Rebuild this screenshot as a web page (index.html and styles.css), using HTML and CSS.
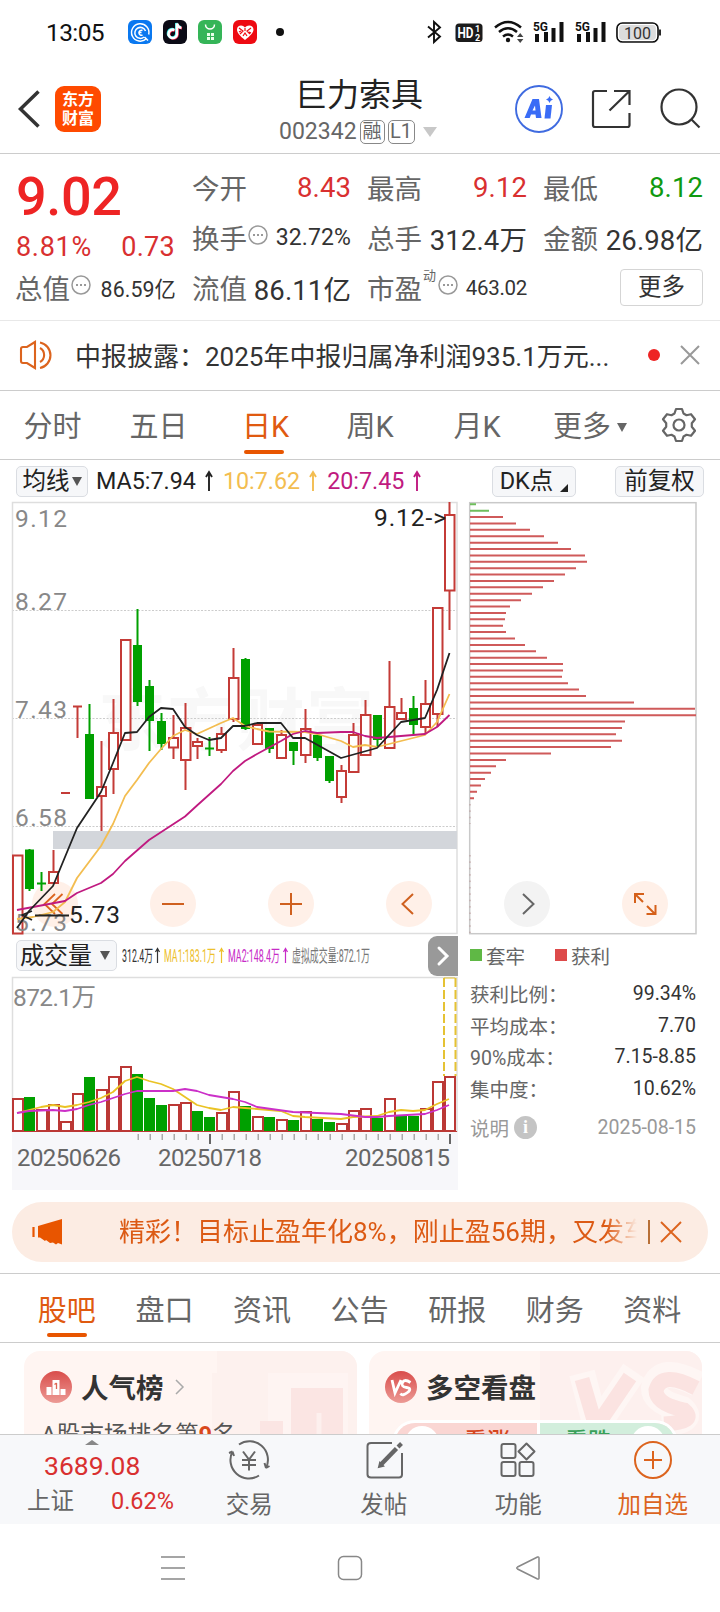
FILE: index.html
```html
<!DOCTYPE html>
<html lang="zh-CN">
<head>
<meta charset="utf-8">
<title>巨力索具 002342</title>
<link rel="stylesheet" href="styles.css">
</head>
<body>
<div class="app">

<div class="status">
  <span class="clock">13:05</span>
  <svg class="apps" width="160" height="24" viewBox="128 20 160 24">
    <rect x="128" y="20" width="24" height="24" rx="6" fill="#0a78f0"/>
    <g fill="none" stroke="#fff" stroke-width="1.5"><path d="M146.500 38.500a8.700 8.700 0 1 1 2.200-4M144 37a5.500 5.500 0 1 1 1.500-6M142.500 30.500a2.500 2.500 0 1 0 0 4.500M138.500 32.500h3M144.500 37l3.500 3.500"/></g>
    <rect x="163" y="20" width="24" height="24" rx="6" fill="#0b0b16"/>
    <g fill="none" stroke-width="2.600"><path d="M175 30.500a4.200 4.200 0 1 0 2.500 4.300V24c.5 2.500 2 4 4.500 4.300" stroke="#ff2c55"/><path d="M173.800 29.500a4.200 4.200 0 1 0 2.500 4.300V23c.5 2.500 2 4 4.500 4.300" stroke="#25e6e2"/><path d="M174.400 30a4.200 4.200 0 1 0 2.500 4.300V23.500c.5 2.500 2 4 4.500 4.300" stroke="#fff"/></g>
    <rect x="198" y="20" width="24" height="24" rx="6" fill="#35b558"/>
    <path d="M205.500 24.500a4.500 4.500 0 0 0 9 0" fill="none" stroke="#fff" stroke-width="1.500"/>
    <path d="M207 33h3v3h-3zm4 0h3v3h-3zm-4 4h3v3h-3zm4 0h3v3h-3z" fill="#e9ffe9"/>
    <rect x="233" y="20" width="24" height="24" rx="6" fill="#ee0a12"/>
    <path d="M245 40c-5-4-8-7-8-10.500 0-4.500 5.500-5.500 8-2 2.500-3.500 8.500-2.500 8.500 2 0 3.500-3.500 6.500-8.500 10.500z" fill="#fff"/>
    <path d="M239 28l4 3-3 3M251 28l-4 3 3 3M243 36l2-3 2 3M245 28v3M241 31l-2 1M249 32l2 1" fill="none" stroke="#ee0a12" stroke-width="1.200"/>
    <circle cx="280" cy="32" r="4" fill="#111"/>
  </svg>
  <svg class="signals" width="236" height="24" viewBox="428 20 236 24">
    <path d="M429 26.500l12 10-6 5.500V22l6 5.500-12 10" fill="none" stroke="#111" stroke-width="1.900"/>
    <rect x="456.500" y="23.500" width="27" height="18.500" rx="3.500" fill="#1b1b1b"/>
    <text x="458.500" y="38" class="hd" textLength="16" lengthAdjust="spacingAndGlyphs">HD</text>
    <text x="476" y="32" class="tiny">1</text><text x="476" y="40.500" class="tiny">2</text>
    <g fill="none" stroke="#111" stroke-width="2.500"><path d="M496 27.500q13-11 26 0M500 32q9-7.500 18 0M504 36.500q5-4 10 0"/></g>
    <circle cx="509" cy="40" r="2.200" fill="#111"/>
    <path d="M518 37l3.200-4 3.200 4zM518 39l3.200 4 3.200-4z" fill="#444"/>
    <g id="cell"><text x="534" y="31" class="fiveg" textLength="15" lengthAdjust="spacingAndGlyphs">5G</text>
    <path d="M538 34v8M547 32v10M554.500 28v14M562.500 22v20" stroke="#111" stroke-width="4"/></g>
    <use href="#cell" x="42"/>
    <rect x="618" y="23" width="41" height="19" rx="5.500" fill="#dcdcdc" stroke="#111" stroke-width="1.700"/>
    <rect x="619.500" y="24.500" width="38" height="16" rx="4" fill="none" stroke="#fff" stroke-width="1.200"/>
    <path d="M661 29.500v6" stroke="#111" stroke-width="1.800"/>
    <text x="625" y="38.500" class="batt" textLength="27">100</text>
  </svg>
</div>

<header class="header">
  <svg class="back" width="22" height="38" viewBox="18 90 22 38"><path d="M38.500 91.500L20.500 109l18 17.500" fill="none" stroke="#333" stroke-width="3.500"/></svg>
  <div class="logo"><span>东方</span><span>财富</span></div>
  <div class="names">
    <div class="stock">巨力索具</div>
    <div class="code"><span>002342</span><i class="badge">融</i><i class="badge l1">L1</i><svg width="14" height="10" viewBox="0 0 14 10"><path d="M0 0h14l-7 10z" fill="#c8c8c8"/></svg></div>
  </div>
  <svg class="tools" width="196" height="50" viewBox="514 84 196 50">
    <circle cx="539" cy="109" r="23" fill="#fff" stroke="#3f6be0" stroke-width="1.900"/>
    <path d="M524.500 118l8-19h6.500l2.500 19h-5.500l-.5-3.500h-4.500l-1.300 3.500zm8-7.500h3l-.5-5z" fill="#3a6cf6" fill-rule="evenodd"/>
    <path d="M546 105h6l-1.500 13.500h-6z" fill="#3a6cf6"/>
    <path d="M549.500 96l1.200 2.300 2.300 1.200-2.300 1.200-1.200 2.300-1.200-2.300-2.300-1.200 2.300-1.200z" fill="#3a6cf6"/>
    <g fill="none" stroke="#333" stroke-width="2.200"><path d="M607 91H595q-2 0-2 2v32q0 2 2 2h32.500q2 0 2-2V113M614 91h15.500v14M629 91.500L609.500 110.500"/><circle cx="679" cy="107" r="17.500"/><path d="M691.500 119.500l8 8"/></g>
  </svg>
</header>

<section class="quote">
  <div class="col main">
    <div class="price">9.02</div>
    <div class="pair red chg"><span>8.81%</span><span>0.73</span></div>
    <div class="pair r3"><label>总值<svg class="dots" width="20" height="20" viewBox="0 0 20 20"><circle cx="10" cy="10" r="9"/><path d="M5 10h2M9 10h2M13 10h2"/></svg></label><b class="s21">86.59亿</b></div>
  </div>
  <div class="col">
    <div class="pair"><label>今开</label><b class="red">8.43</b></div>
    <div class="pair"><label>换手<svg class="dots" width="20" height="20" viewBox="0 0 20 20"><circle cx="10" cy="10" r="9"/><path d="M5 10h2M9 10h2M13 10h2"/></svg></label><b class="s23">32.72%</b></div>
    <div class="pair"><label>流值</label><b>86.11亿</b></div>
  </div>
  <div class="col">
    <div class="pair"><label>最高</label><b class="red">9.12</b></div>
    <div class="pair"><label>总手</label><b>312.4万</b></div>
    <div class="pair"><label>市盈<sup>动</sup><svg class="dots" width="20" height="20" viewBox="0 0 20 20"><circle cx="10" cy="10" r="9"/><path d="M5 10h2M9 10h2M13 10h2"/></svg></label><b class="s20">463.02</b></div>
  </div>
  <div class="col">
    <div class="pair"><label>最低</label><b class="green">8.12</b></div>
    <div class="pair"><label>金额</label><b>26.98亿</b></div>
    <div class="pair end"><span class="more">更多</span></div>
  </div>
</section>

<section class="news">
  <svg width="36" height="30" viewBox="19 340 36 30" fill="none" stroke="#dc641e" stroke-width="2.100"><path d="M35 342v26l-8-5h-4q-2 0-2-2v-12q0-2 2-2h4zM40 348a8 8 0 0 1 0 14M40 342.500a13 13 0 0 1 0 25.500"/></svg>
  <span class="headline">中报披露：2025年中报归属净利润935.1万元...</span>
  <i class="reddot"></i>
  <svg class="close" width="20" height="20" viewBox="0 0 20 20"><path d="M1 1l18 18M19 1L1 19" stroke="#999" stroke-width="2"/></svg>
</section>

<nav class="ktabs">
  <span>分时</span><span>五日</span><span class="on">日K</span><span>周K</span><span>月K</span>
  <span class="moretab">更多<svg width="10" height="9" viewBox="0 0 10 9"><path d="M0 0h10L5 9z" fill="#666"/></svg></span>
  <span class="gear"><svg width="36" height="36" viewBox="0 0 36 36" fill="none" stroke="#666" stroke-width="2.200"><path d="M15 2h6l1.500 4.500 3 1.700 4.500-1 4 5-3.200 4v3.600l3.200 4-4 5-4.500-1-3 1.700L21 34h-6l-1.500-4.500-3-1.700-4.500 1-4-5 3.200-4v-3.600l-3.200-4 4-5 4.500 1 3-1.700z" stroke-linejoin="round"/><circle cx="18" cy="18" r="5.500"/></svg></span>
</nav>

<div class="marow">
  <span class="chip avg">均线<svg width="10" height="9" viewBox="0 0 10 9"><path d="M0 0h10L5 9z" fill="#555"/></svg></span>
  <span class="ma m5">MA5:7.94</span><svg class="up m5" viewBox="0 0 8 20"><path d="M4 20V3M1 6l3-5 3 5"/></svg>
  <span class="ma m10">10:7.62</span><svg class="up m10" viewBox="0 0 8 20"><path d="M4 20V3M1 6l3-5 3 5"/></svg>
  <span class="ma m20">20:7.45</span><svg class="up m20" viewBox="0 0 8 20"><path d="M4 20V3M1 6l3-5 3 5"/></svg>
  <span class="chip dk">DK点<svg width="8" height="8" viewBox="0 0 8 8"><path d="M8 0v8H0z" fill="#222"/></svg></span>
  <span class="chip fq">前复权</span>
</div>

<div class="charts">
 <div class="left">
  <svg class="kline" width="446" height="432" viewBox="12 502 446 432">
    <text x="98" y="745" class="wm" textLength="276">东方财富</text>
    <path d="M12 610.500h445M12 718.500h445M12 826.500h445" stroke="#ccc" stroke-dasharray="2 1.500"/>
    <rect x="12.500" y="502.500" width="444.500" height="431" fill="none" stroke="#dedede" stroke-width="1.500"/>
    <rect x="53" y="831" width="404" height="18" fill="#d3d6db"/>
    <circle cx="55" cy="904" r="23" fill="#fff0e8"/>
    <path d="M55 894l-10.500 10L55 914M62.500 894L52 904l10.500 10" fill="none" stroke="#dc641e" stroke-width="1.800"/>
    <g fill="#fff" stroke="#c43b37" stroke-width="2">
      <path d="M53.500 850v22M77.500 706v32M101.500 741v90M113.500 699v95M173.500 715v44M185.500 703v87M197.500 738v21M221.500 727v26M233.500 648v74M257.500 725v20M281.500 730v29M305.500 709v54M341.500 765v38M353.500 723v12M365.500 700v15M389.500 661v46M401.500 698v15M425.500 680v54M437.500 714v13M449.500 502v128M61 793h9M73 706.500h9"/>
      <path d="M13 855.500h9.500v78H13zM49 872h9v11h-9zM97 787h9v9h-9zM109 733h9v36h-9zM121 640h9.500v100H121zM169 738h9v9.500h-9zM181 728h9.500v32H181zM193 742h9v4h-9zM217 734h9v16h-9zM229 678h9.500v41H229zM253 725h9v19h-9zM277 735h9v23h-9zM301 729h9.500v26H301zM337 771h9v26h-9zM349 735h9.500v37H349zM361 715h9.500v40H361zM385 707h9.500v41H385zM397 713h9v6h-9zM421 704h9v23h-9zM433 608h9.500v106H433zM445 515h9.500v75.500H445z"/>
    </g>
    <path d="M29.500 849v42M41.500 872v19M37 883.500h9M89.500 704v95M137.500 609v97M149.500 680v71M161.500 713v37M209.500 737v19M205 748.500h9M245.500 658v72M269.500 728v25M293.500 742v23M317.500 735v26M329.500 756v27M377.500 715v32M413.500 696v38" stroke="#00a000" stroke-width="2" fill="none"/>
    <path d="M25 849.500h9V889h-9zM85 734h9v65h-9zM133 645h9v57h-9zM145 686h9v35h-9zM157 721h9v23h-9zM241 659h9v70h-9zM265 728h9v21h-9zM289 742h9v9h-9zM313 735h9v23h-9zM325 756h9v25h-9zM373 715h9v25h-9zM409 708h9v17h-9z" fill="#00a000"/>
    <g class="axis"><text x="15" y="527" textLength="52">9.12</text><text x="15" y="609.500" textLength="52">8.27</text><text x="15" y="717.500" textLength="52">7.43</text><text x="15" y="825.500" textLength="52">6.58</text><text x="15" y="930.500" textLength="52">5.73</text></g>
    <g fill="none" stroke-width="1.800" stroke-linejoin="round">
      <path stroke="#f3bd50" d="M17 919L33 917 53 912 65 902 77 878 101 846 113 824 125 796 137 780 149 763 161 749 173 736 185 730 197 734 221 723 233 718 245 726 257 729 269 731.500 305 732 317 734 341 741 353 747 365 745 377 747 401 741 425 735 437 722 449.500 694"/>
      <path stroke="#c01a80" d="M17 910L33 907 65 901 77 893 101 883 113 874 125 861 149 840 185 816.500 197 805.500 221 784 233 771 245 761 257 754 281 741 293 734 305 731 317 733 341 732 353 732 365 736 377 738 389 737 425 734 437 727 449.500 715"/>
      <path stroke="#222" d="M17 928L29 911 53 886 77 828 89 810 101 792 113 763 125 733 137 732 149 717 161 708 173 709 185 727 197 735 209 740 221 738 233 726 245 726 257 723 281 723 293 738 305 738 341 758 377 748 401 722 425 718 437 690 449.500 653"/>
      <path stroke="#222" d="M32 911l-10 4 10 5M35 915.500h34"/>
    </g>
    <text x="69" y="923" class="mark" textLength="51">5.73</text>
    <text x="374" y="526" class="mark" textLength="72">9.12-&gt;</text>
    <g fill="#fff0e8"><circle cx="173" cy="904" r="23"/><circle cx="291" cy="904" r="23"/><circle cx="409" cy="904" r="23"/></g>
    <path d="M162 904h22M280 904h22M291 893v22M413 894l-10.500 10L413 914" fill="none" stroke="#cf601f" stroke-width="2"/>
  </svg>
  <div class="volhead">
    <span class="chip volchip">成交量<svg width="10" height="9" viewBox="0 0 10 9"><path d="M0 0h10L5 9z" fill="#555"/></svg></span>
    <svg class="volma" width="250" height="24" viewBox="121 944 250 24">
      <text x="122" y="962" fill="#333" textLength="31" lengthAdjust="spacingAndGlyphs">312.4万</text>
      <text x="164" y="962" fill="#edc02c" textLength="52" lengthAdjust="spacingAndGlyphs">MA1:183.1万</text>
      <text x="228" y="962" fill="#c72bc7" textLength="52" lengthAdjust="spacingAndGlyphs">MA2:148.4万</text>
      <text x="292" y="962" fill="#777" textLength="78" lengthAdjust="spacingAndGlyphs">虚拟成交量:872.1万</text>
      <g fill="none" stroke-width="1.200"><path stroke="#333" d="M157.500 963v-14m-2 3l2-3.500 2 3.500"/><path stroke="#edc02c" d="M221.500 963v-14m-2 3l2-3.500 2 3.500"/><path stroke="#c72bc7" d="M285.500 963v-14m-2 3l2-3.500 2 3.500"/></g>
    </svg>
    <span class="next"><svg width="12" height="20" viewBox="0 0 12 20"><path d="M2 2l8 8-8 8" fill="none" stroke="#fff" stroke-width="3" stroke-linecap="round"/></svg></span>
  </div>
  <svg class="volume" width="446" height="213" viewBox="12 977 446 213">
    <rect x="12" y="1132" width="446" height="58" fill="#f7f7fa"/>
    <path d="M12.500 1132V977.500H457V1132" fill="none" stroke="#dedede" stroke-width="1.500"/>
    <text x="13" y="1006" class="axis" textLength="83">872.1万</text>
    <g fill="#fff" stroke="#bb3835" stroke-width="2"><path d="M13 1099h10v32H13zM37 1110h10v21H37zM49 1105h10v26H49zM61 1122h10v9H61zM73 1094h10v37H73zM97 1090h10v41H97zM109 1077h10v54h-10zM121 1067h10v64h-10zM169 1105h10v26h-10zM181 1103h10v28h-10zM217 1113h10v18h-10zM229 1092h10v39h-10zM253 1117h10v14h-10zM277 1120h10v11h-10zM301 1112h10v19h-10zM337 1124h10v7h-10zM349 1111h10v20h-10zM361 1109h10v22h-10zM385 1099h10v32h-10zM421 1109h10v22h-10zM433 1082h10v49h-10zM445 1077h10v54h-10z"/></g>
    <path d="M24 1097h11v34H24zM84 1077h11v54H84zM132 1074h11v57h-11zM144 1098h11v33h-11zM156 1105h11v26h-11zM192 1111h11v20h-11zM204 1117h11v14h-11zM240 1106h11v25h-11zM264 1117h11v14h-11zM288 1120h11v11h-11zM312 1119h11v12h-11zM324 1122h11v9h-11zM372 1118h11v13h-11zM396 1116h11v15h-11zM408 1116h11v15h-11z" fill="#00a000"/>
    <path d="M12 1131.500h445" stroke="#bb3835"/>
    <path d="M444 978v98M455.500 978v98" stroke="#e5c233" stroke-width="2" stroke-dasharray="9 3"/><path d="M444 978h11" stroke="#e5c233"/>
    <g fill="none" stroke-width="1.800" stroke-linejoin="round">
      <path stroke="#eac324" d="M17 1113L29 1110 41 1107 53 1105 65 1107 77 1105 89 1102 101 1098 113 1092 125 1081 137 1077 149 1081 161 1084 173 1089 185 1097 197 1105 209 1108 221 1110 233 1107 245 1108 281 1111 293 1116 305 1117 341 1119 353 1117 377 1116 389 1112 401 1110 413 1111 425 1110 437 1104 449 1099"/>
      <path stroke="#cb30c8" d="M17 1113L29 1111 53 1110 65 1111 77 1109 89 1105 101 1102 113 1098 125 1094 137 1091 173 1091 185 1089 197 1091 209 1095 233 1099 245 1102 257 1107 293 1112 341 1114 365 1117 377 1117 389 1116 425 1114 437 1110 449 1105"/>
    </g>
    <path d="M137.500 1137h312.500" stroke="#aaa" stroke-width="6" stroke-dasharray="1.500 10.500"/>
    <path d="M210 1134v10M450 1134v10" stroke="#666" stroke-width="2"/>
    <g class="date"><text x="17" y="1166" textLength="104">20250626</text><text x="158" y="1166" textLength="104">20250718</text><text x="345" y="1166" textLength="105">20250815</text></g>
  </svg>
 </div>

 <div class="right">
  <svg width="228" height="432" viewBox="469 502 228 432">
    <rect x="469.700" y="502.700" width="226.300" height="431" fill="none" stroke="#c9c9c9" stroke-width="1.500"/>
    <path d="M470 504.300h6m-6 6.390h19" stroke="#6fbd5c" stroke-width="2"/>
    <path fill="none" stroke="#cf5a5a" stroke-width="2" d="M470 517.080h33m-33 6.390h46m-46 6.390h60m-60 6.390h74m-74 6.390h88m-88 6.390h101m-101 6.390h115m-115 6.390h117m-117 6.390h106m-106 6.390h95m-95 6.390h84m-84 6.390h73m-73 6.390h62m-62 6.390h51m-51 6.390h40m-40 6.390h36m-36 6.390h35m-35 6.390h33m-33 6.390h36m-36 6.390h45m-45 6.390h55m-55 6.390h66m-66 6.390h77m-77 6.390h93m-93 6.390h93m-93 6.390h92m-92 6.390h98m-98 6.390h109m-109 6.390h116m-116 6.390h164m-164 6.390h225m-225 6.390h226m-226 6.390h155m-155 6.390h152m-152 6.390h146m-146 6.390h152m-152 6.390h141m-141 6.390h81m-81 6.390h36m-36 6.390h26m-26 6.390h21m-21 6.390h15m-15 6.390h11m-11 6.390h7m-7 6.390h4"/>
    <path d="M470 804v20M470 855v78" stroke="#b99" stroke-dasharray="1.500 4.890"/>
    <circle cx="527" cy="904" r="23" fill="#f3f3f3"/><path d="M523 894l10.500 10L523 914" fill="none" stroke="#666" stroke-width="2"/>
    <circle cx="645" cy="904" r="23" fill="#fff0e8"/><path d="M644 894h-9v9M635 894l8 8M646.500 914h9v-9M655 914l-8-8" fill="none" stroke="#d5601a" stroke-width="2"/>
  </svg>
  <div class="legend"><i class="sq g"></i><span>套牢</span><i class="sq r"></i><span>获利</span></div>
  <dl class="stats">
    <div><dt>获利比例：</dt><dd>99.34%</dd></div>
    <div><dt>平均成本：</dt><dd>7.70</dd></div>
    <div><dt>90%成本：</dt><dd>7.15-8.85</dd></div>
    <div><dt>集中度：</dt><dd>10.62%</dd></div>
    <div class="note"><dt>说明<i class="info">i</i></dt><dd>2025-08-15</dd></div>
  </dl>
 </div>
</div>

<div class="promo">
  <svg width="32" height="28" viewBox="31 1218 32 28"><path d="M62 1219v25.500L58 1243l-2 1.500-3-2-3 .5-4-3-1 1-5-3.500h-2v-11.500z" fill="#e85500"/><path d="M33.500 1227v10" stroke="#e85500" stroke-width="2.200"/></svg>
  <span class="ptext">精彩！目标止盈年化8%，刚止盈56期，又发车</span>
  <i class="bar"></i>
  <svg width="22" height="22" viewBox="0 0 22 22"><path d="M1 1l20 20M21 1L1 21" stroke="#dc641e" stroke-width="1.900"/></svg>
</div>

<nav class="itabs"><span class="on">股吧</span><span>盘口</span><span>资讯</span><span>公告</span><span>研报</span><span>财务</span><span>资料</span></nav>

<section class="cards">
  <div class="card">
    <svg class="deco" width="145" height="83" viewBox="0 0 145 83"><path d="M5 0H145V83H0V22H5z" fill="#fdf1ee"/><path d="M56 83V22h80v61z" fill="#fef4f2"/><path d="M79 37h52v46H79zM48 70h23v13H48z" fill="#fbe5e3"/><path d="M107 62v21" stroke="#fdf0ee" stroke-width="5"/></svg>
    <div class="chead"><svg width="32" height="32" viewBox="0 0 32 32"><defs><linearGradient id="rd" x1="0" y1="0" x2="0" y2="1"><stop offset="0" stop-color="#d94d4b"/><stop offset="1" stop-color="#ec9a95"/></linearGradient></defs><circle cx="16" cy="16" r="16" fill="url(#rd)"/><path d="M6.500 16h5v8h-5zM12.500 9h7v15h-7zM20.500 18h5v6h-5z" fill="#fff"/><path d="M16.500 12v6M14.500 13.500l2-1.500" stroke="#d65" stroke-width="1.300" fill="none"/></svg>
    <h3>人气榜</h3><svg width="10" height="16" viewBox="0 0 10 16"><path d="M1 1l7 7-7 7" fill="none" stroke="#aaa" stroke-width="1.500"/></svg></div>
    <p class="rank">A股市场排名第<em>9</em>名</p>
  </div>
  <div class="card">
    <svg class="deco" width="162" height="83" viewBox="0 0 162 83"><path d="M0 0H162V83H0z" fill="#fdf0ee"/><path d="M42 22l14 54L94 20M158 33q-38-20-44 4 0 14 28 21 14 12-20 15" fill="none" stroke="#fef6f4" stroke-width="26"/><path d="M42 28l14 48L90 26M156 37q-34-18-40 2 0 14 28 20 14 12-20 14" fill="none" stroke="#fbe3e1" stroke-width="15"/></svg>
    <div class="chead"><svg width="32" height="32" viewBox="0 0 32 32"><circle cx="16" cy="16" r="16" fill="url(#rd)"/><path d="M7 9l3 13L16 9M25.500 11.500q-6-4-8 0t4 5 1 5-7 1" fill="none" stroke="#fff" stroke-width="2.800"/></svg><h3>多空看盘</h3></div>
    <div class="vote"><span class="bull"><i></i>看涨</span><span class="bear">看跌<i></i></span></div>
  </div>
</section>

<footer class="bottom">
  <div class="index"><svg width="14" height="5" viewBox="0 0 14 5"><path d="M0 5l7-5 7 5z" fill="#888"/></svg><div class="pts">3689.08</div><div class="sz"><span>上证</span><b>0.62%</b></div></div>
  <div class="act"><svg width="44" height="40" viewBox="0 0 44 40" fill="none" stroke="#666" stroke-width="2"><path d="M12 4.500A18.500 18.500 0 0 1 39 28M39 28l3.500-2M39 28l-1.500-5M32 35.500A18.500 18.500 0 0 1 5.500 11.500M5.500 11.500L2 13M5.500 11.500L7 16M16 11.500l6 8 6-8M22 19.500v11M15 20h14M15 25h14"/></svg><span>交易</span></div>
  <div class="act"><svg width="40" height="40" viewBox="0 0 40 40" fill="none" stroke="#666" stroke-width="2"><path d="M28 3H7Q3.500 3 3.500 6v28.500q0 3 3.500 3h28q3 0 3-3V13"/><path d="M17 24.500l15.500-16" stroke-width="4.500"/><path d="M15 27l1-4 3 3z" fill="#666"/><path d="M34 7l3.500-3.500" stroke-width="4"/></svg><span>发帖</span></div>
  <div class="act"><svg width="40" height="40" viewBox="0 0 40 40" fill="none" stroke="#666" stroke-width="2"><rect x="3.500" y="4" width="14" height="14" rx="2"/><rect x="3.500" y="22" width="14" height="14" rx="2"/><rect x="21.500" y="22" width="14" height="14" rx="2"/><path d="M28.500 3.500l8 8-8 8-8-8z" stroke-linejoin="round"/></svg><span>功能</span></div>
  <div class="act add"><svg width="40" height="40" viewBox="0 0 40 40" fill="none" stroke="#dc641e" stroke-width="2"><circle cx="20" cy="20" r="18"/><path d="M11 20h18M20 11v18"/></svg><span>加自选</span></div>
</footer>

<div class="sysnav">
  <svg width="24" height="26" viewBox="0 0 24 26"><path d="M0 2h24M0 13h24M0 24h24" stroke="#888" stroke-width="1.700"/></svg>
  <svg width="26" height="26" viewBox="0 0 26 26"><rect x="1.500" y="1.500" width="23" height="23" rx="5" fill="none" stroke="#888" stroke-width="1.500"/></svg>
  <svg width="26" height="26" viewBox="0 0 26 26"><path d="M24 3v20q0 1.500-1.500 1L2.500 14q-1.500-1 0-2L22.500 2q1.500-.5 1.500 1z" fill="none" stroke="#888" stroke-width="1.500"/></svg>
</div>
</div>
</body>
</html>
```

FILE: styles.css
```css
* { box-sizing: border-box; }
body { margin: 0; background: #fff; font-family: Roboto, "Noto Sans CJK SC", sans-serif; color: #333; }
svg { display: block; flex: none; overflow: visible; }
i, em { font-style: normal; }
.app { width: 720px; height: 1612px; overflow: hidden; display: flex; flex-direction: column; }
.app > * { flex: none; }
.red { color: #d93030; }
.green { color: #109a10; }

/* system status bar */
.status { height: 64px; display: flex; align-items: center; padding: 0 57px 0 46px; }
.clock { font-size: 24.500px; width: 82px; line-height: 64px; letter-spacing: -0.600px; padding-top: 2px; color: #111; }
.signals { margin-left: auto; }
.hd { font: 700 14px Roboto, sans-serif; fill: #fff; }
.tiny { font: 700 9px Roboto, sans-serif; fill: #fff; }
.fiveg { font: 700 13px Roboto, sans-serif; fill: #111; }
.batt { font: 400 16px Roboto, sans-serif; fill: #333; }

/* title bar */
.header { height: 90px; border-bottom: 1px solid #ccc; display: flex; align-items: center; padding-left: 18px; }
.logo { width: 46px; height: 46px; margin-left: 15px; border-radius: 9px; background: #ff4a00; color: #fff; display: flex; flex-direction: column; align-items: center; justify-content: center; font-weight: 700; font-size: 16px; line-height: 19px; }
.names { width: 184px; margin-left: 168px; display: flex; flex-direction: column; align-items: center; }
.stock { font-size: 32px; line-height: 44px; color: #222; padding: 2px 4px 0 0; }
.code { height: 30px; align-self: flex-start; margin-left: 10px; font-size: 23px; color: #666; display: flex; align-items: center; white-space: nowrap; }
.code svg { margin-left: 8px; }
.badge { width: 25px; height: 24px; margin-left: 3px; border: 1.500px solid #888; border-radius: 5px; font-size: 19px; line-height: 21px; text-align: center; }
.l1 { width: 27px; font-size: 20px; }
.tools { margin-left: 61px; }

/* quote grid */
.quote { height: 167px; border-bottom: 1px solid #e8e8e8; display: grid; grid-template-columns: 160px 158px 159px 159px; gap: 17px; padding: 8px 0 0 16px; }
.col { display: flex; flex-direction: column; }
.pair { height: 50px; display: flex; align-items: center; justify-content: space-between; white-space: nowrap; }
.pair label { font-size: 27.500px; color: #666; display: flex; align-items: center; margin-left: -1px; }
.pair b { font-weight: 400; font-size: 27.500px; letter-spacing: 0.100px; padding-top: 1px; }
.pair b.s23 { font-size: 23px; }
.pair b.s21 { font-size: 21.300px; }
.pair b.s20 { font-size: 20.500px; letter-spacing: -0.300px; }
.main .price { height: 62px; line-height: 70px; font-size: 54px; font-weight: 500; color: #ee2424; letter-spacing: -0.400px; }
.main .chg { height: 38px; line-height: 38px; font-size: 27px; padding: 7px 1px 0 0; letter-spacing: 0.300px; }
.main .chg span:first-child { letter-spacing: 0.700px; }
.dots { margin-bottom: 4px; margin-left: 1px; }
.dots circle { fill: none; stroke: #999; stroke-width: 1.500; }
.dots path { stroke: #999; stroke-width: 2; }
sup { font-size: 13px; line-height: 13px; align-self: flex-start; margin: 2px 1px 0 1px; vertical-align: top; }
.end { justify-content: flex-end; }
.more { width: 83px; height: 37px; border: 1.500px solid #d5d5d5; border-radius: 4px; font-size: 23.500px; line-height: 34px; text-align: center; }

/* news strip */
.news { height: 70px; border-bottom: 1px solid #ccc; display: flex; align-items: center; padding: 0 0 2px 19px; }
.headline { margin-left: 20px; width: 573px; font-size: 26px; white-space: nowrap; }
.reddot { width: 12px; height: 12px; border-radius: 50%; background: #ee2424; }
.close { margin-left: 20px; }

/* period tabs */
.ktabs { height: 69px; border-bottom: 1px solid #ccc; display: grid; grid-template-columns: 105px 107px 107px 102px 112px 114px 64px; justify-items: center; align-items: center; font-size: 29px; line-height: 42px; color: #666; padding-top: 4px; }
.ktabs span, .itabs span { position: relative; }
.ktabs .gear { padding-bottom: 5px; }
.moretab { display: flex; align-items: center; gap: 6px; }
.on { color: #e05a10; }
.on::after { content: ""; position: absolute; left: 50%; margin-left: -21px; bottom: -6px; width: 40px; height: 4px; border-radius: 2px; background: #e85500; }

/* moving average row */
.marow { height: 42px; display: flex; align-items: center; padding: 0 16px 0 16px; }
.chip { height: 31px; border: 1px solid #dadde2; border-radius: 5px; background: #f6f7f9; font-size: 23.500px; line-height: 28px; color: #222; display: flex; align-items: center; justify-content: center; white-space: nowrap; }
.avg { width: 72px; margin-right: 8px; gap: 2px; }
.ma { font-size: 23.300px; white-space: nowrap; }
.up { width: 8px; height: 20px; margin: 0 10px 0 9px; fill: none; stroke: currentColor; stroke-width: 1.900; }
.m5 { color: #222; } .m10 { color: #f3bd50; } .m20 { color: #c01a80; }
.dk { width: 84px; margin-left: auto; gap: 7px; }
.dk svg { margin-top: 14px; }
.fq { width: 89px; margin-left: 39px; }

/* charts */
.charts { display: flex; gap: 11px; padding-left: 12px; height: 688px; }
.left { width: 446px; }
.right { width: 228px; }
.axis { font-size: 24.500px; fill: #888; }
.mark { font-size: 24.500px; fill: #222; }
.date { font-size: 24px; fill: #666; }
.wm { font-size: 68px; font-weight: 700; fill: #f8f8f8; }
.volhead { height: 43px; display: flex; align-items: center; padding-left: 4px; }
.volchip { width: 101px; gap: 8px; font-size: 24px; padding-right: 3px; }
.volma { margin-left: 4px; font-size: 17.500px; }
.next { width: 30px; height: 40px; margin-left: auto; border-radius: 9px 0 0 9px; background: #999; display: flex; align-items: center; justify-content: center; }
.legend { height: 42px; display: flex; align-items: center; font-size: 19.500px; color: #666; padding-left: 1px; }
.sq { width: 12px; height: 12px; margin-right: 4px; }
.sq.g { background: #5fb845; } .sq.r { background: #dd4a4a; margin-left: 30px; }
.stats { margin: 2px 0 0 1px; }
.stats div { height: 31.500px; display: flex; align-items: center; justify-content: space-between; font-size: 19.500px; }
.stats dt { color: #666; display: flex; align-items: center; }
.stats dd { margin: 0 1px 0 0; }
.stats .note { height: 47px; color: #999; }
.stats .note dt { color: #999; }
.info { width: 23px; height: 23px; margin-left: 5px; border-radius: 50%; background: #c4c4c4; color: #fff; font: 700 18px/23px "Liberation Serif", serif; text-align: center; }

/* promotion */
.promo { height: 60px; margin: 12px 12px 11px; border-radius: 30px; background: #fcece3; display: flex; align-items: center; padding-left: 19px; }
.ptext { width: 518px; margin-left: 56px; overflow: hidden; white-space: nowrap; font-size: 26px; line-height: 38px; color: #dc5a14; -webkit-mask-image: linear-gradient(90deg, #000 94%, transparent); mask-image: linear-gradient(90deg, #000 94%, transparent); }
.bar { width: 1.500px; height: 24px; background: #b87038; margin: 0 10px 0 11px; }

/* info tabs */
.itabs { height: 70px; border-top: 1px solid #ccc; border-bottom: 1px solid #ccc; display: grid; grid-template-columns: repeat(7, 97.600px); padding: 5px 0 0 18px; justify-items: center; align-items: center; font-size: 29px; line-height: 42px; color: #666; }
.itabs .on::after { margin-left: -20px; bottom: -5px; }

/* cards */
.cards { height: 91px; padding: 8px 0 0 24px; display: flex; gap: 12px; overflow: hidden; }
.card { position: relative; width: 333px; height: 130px; border-radius: 16px; background: #fff5f2; overflow: hidden; }
.deco { position: absolute; right: 0; top: 0; }
.chead { position: relative; display: flex; align-items: center; height: 72px; padding-left: 16px; }
h3 { margin: -2px 11px 0 9px; font-size: 27.500px; font-weight: 700; }
.rank { position: relative; margin: -5px 0 0 17px; font-size: 23.700px; line-height: 34px; color: #555; white-space: nowrap; }
.rank em { color: #d9481c; font-weight: 700; }
.vote { position: relative; margin: -3px 0 0 23px; width: 286px; height: 46px; border: 3px solid #fff; border-radius: 23px; display: flex; overflow: hidden; font-size: 23px; font-weight: 500; line-height: 37px; }
.vote span { display: flex; align-items: flex-start; }
.vote i { width: 34px; height: 34px; margin-top: 3px; border-radius: 50%; background: #fff; }
.bull { width: 142px; background: #fad6d3; color: #d5451c; padding-left: 10px; gap: 25px; }
.bear { flex: 1; background: #d2eedc; color: #3aa05a; padding-right: 10px; justify-content: flex-end; gap: 20px; border-left: 3px solid #fff; }

/* bottom bar */
.bottom { height: 90px; border-top: 1px solid #ccc; background: #f7f8fa; display: flex; }
.index { width: 182px; padding: 5px 0 0 27px; color: #d93030; }
.index svg { margin-left: 58px; }
.pts { margin-left: 17px; font-size: 26.500px; line-height: 42px; }
.sz { width: 147px; display: flex; justify-content: space-between; align-items: center; font-size: 23.500px; line-height: 28px; color: #666; }
.sz b { font-weight: 400; color: #d93030; }
.act { width: 134.500px; display: flex; flex-direction: column; align-items: center; padding-top: 5px; font-size: 23.500px; color: #666; }
.act span { line-height: 50px; }
.add { color: #dc641e; }

/* system navigation */
.sysnav { height: 88px; display: flex; align-items: center; justify-content: center; gap: 152px; padding-right: 18px; }
```
